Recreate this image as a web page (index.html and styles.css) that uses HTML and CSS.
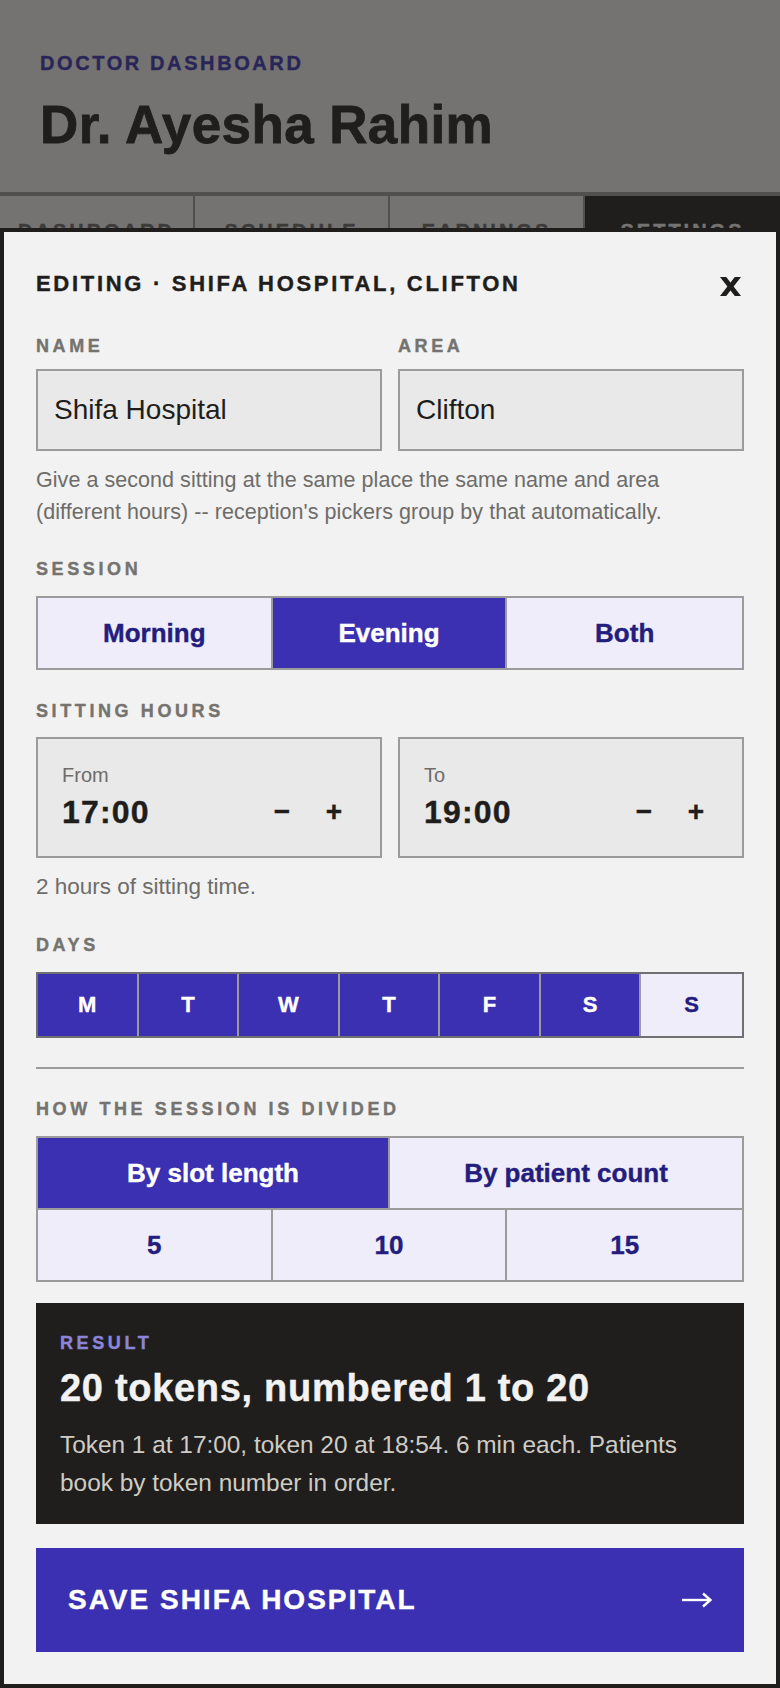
FILE: index.html
```html
<!DOCTYPE html>
<html lang="en">

<head>
    <meta charset="UTF-8">
    <meta name="viewport" content="width=device-width, initial-scale=1.0">
    <title>Doctor Dashboard - Settings</title>
    <link rel="stylesheet" href="styles.css">
</head>

<body>
    <!-- Trang phia sau -->
    <header class="top">
        <p class="kicker">DOCTOR DASHBOARD</p>
        <h1 class="doctor">Dr. Ayesha Rahim</h1>
    </header>
    <nav class="tabs">
        <div class="tab">DASHBOARD</div>
        <div class="tab">SCHEDULE</div>
        <div class="tab">EARNINGS</div>
        <div class="tab active">SETTINGS</div>
    </nav>

    <div class="backdrop"></div>

    <!-- Sheet chinh sua -->
    <section class="sheet">
        <div class="sheet-head">
            <h2 class="sheet-title">EDITING · SHIFA HOSPITAL, CLIFTON</h2>
            <button class="close" aria-label="Close">
                <svg width="21" height="19" viewBox="0 0 21 19">
                    <polygon points="0,0 6.2,0 21,19 14.8,19" fill="#1f1e1c" />
                    <polygon points="14.8,0 21,0 6.2,19 0,19" fill="#1f1e1c" />
                </svg>
            </button>
        </div>

        <div class="fields">
            <div>
                <p class="label label-tight">NAME</p>
                <input class="text-input" type="text" value="Shifa Hospital">
            </div>
            <div>
                <p class="label label-tight">AREA</p>
                <input class="text-input" type="text" value="Clifton">
            </div>
        </div>
        <p class="help">Give a second sitting at the same place the same name and area (different hours) -- reception's pickers group by that automatically.</p>

        <div class="block">
            <p class="label">SESSION</p>
            <div class="seg seg-3">
                <button class="seg-btn">Morning</button>
                <button class="seg-btn on">Evening</button>
                <button class="seg-btn">Both</button>
            </div>
        </div>

        <div class="block">
            <p class="label label-hours">SITTING HOURS</p>
            <div class="fields fields-flat">
                <div class="time">
                    <div class="time-cap">From</div>
                    <div class="time-row">
                        <span class="time-val">17:00</span>
                        <span class="steps"><button class="step">−</button><button class="step">+</button></span>
                    </div>
                </div>
                <div class="time">
                    <div class="time-cap">To</div>
                    <div class="time-row">
                        <span class="time-val">19:00</span>
                        <span class="steps"><button class="step">−</button><button class="step">+</button></span>
                    </div>
                </div>
            </div>
            <p class="hint">2 hours of sitting time.</p>
        </div>

        <div class="block block-days">
            <p class="label">DAYS</p>
            <div class="days">
                <button class="day on">M</button>
                <button class="day on">T</button>
                <button class="day on">W</button>
                <button class="day on">T</button>
                <button class="day on">F</button>
                <button class="day on">S</button>
                <button class="day">S</button>
            </div>
        </div>

        <hr class="rule">

        <div class="block">
            <p class="label">HOW THE SESSION IS DIVIDED</p>
            <div class="split">
                <div class="seg-row seg-2">
                    <button class="seg-btn on">By slot length</button>
                    <button class="seg-btn">By patient count</button>
                </div>
                <div class="seg-row seg-3 seg-row-last">
                    <button class="seg-btn">5</button>
                    <button class="seg-btn">10</button>
                    <button class="seg-btn">15</button>
                </div>
            </div>
        </div>

        <div class="result">
            <p class="result-label">RESULT</p>
            <p class="result-title">20 tokens, numbered 1 to 20</p>
            <p class="result-text">Token 1 at 17:00, token 20 at 18:54. 6 min each. Patients book by token number in order.</p>
        </div>

        <button class="save">
            <span>SAVE SHIFA HOSPITAL</span>
            <svg width="30" height="16" viewBox="0 0 30 16">
                <line x1="0" y1="8" x2="28" y2="8" stroke="#ffffff" stroke-width="2.4" />
                <polyline points="21,1.5 28.5,8 21,14.5" fill="none" stroke="#ffffff" stroke-width="2.4" />
            </svg>
        </button>
    </section>
</body>

</html>
```

FILE: styles.css
```css
* {
    box-sizing: border-box;
}

body {
    margin: 0;
    background-color: #f2f2f2;
    color: #1f1e1c;
    font-family: "Liberation Sans", Arial, sans-serif;
}

p,
h1,
h2 {
    margin: 0;
}

button {
    font-family: inherit;
    cursor: pointer;
}

/* chu dam hon cho giong font goc */
.kicker,
.tab,
.sheet-title,
.label,
.seg-btn,
.day,
.time-val,
.step,
.result-label,
.result-title,
.save {
    -webkit-text-stroke: 0.4px currentColor;
}

/* trang phia sau */

.top {
    padding: 51px 40px 37px;
    border-bottom: 4px solid #9b9b9b;
}

.kicker {
    font-size: 20px;
    line-height: 24px;
    font-weight: bold;
    letter-spacing: 2.6px;
    color: #3a30b1;
}

.doctor {
    margin-top: 20px;
    font-size: 53px;
    line-height: 60px;
    letter-spacing: 0.4px;
    -webkit-text-stroke: 0.8px currentColor;
}

.tabs {
    display: grid;
    grid-template-columns: repeat(4, 1fr);
}

.tab {
    padding: 23px 0 22px;
    text-align: center;
    font-size: 20px;
    line-height: 24px;
    font-weight: bold;
    letter-spacing: 3px;
    color: #666666;
    border-right: 2px solid #9b9b9b;
}

.tab.active {
    background-color: #1f1e1c;
    color: #f2f2f2;
    border-right: 0;
}

.backdrop {
    position: fixed;
    inset: 0;
    background-color: rgba(31, 30, 28, 0.6);
}

/* sheet */

.sheet {
    position: fixed;
    left: 0;
    right: 0;
    bottom: 0;
    background-color: #f2f2f2;
    border: 4px solid #1f1e1c;
    padding: 38px 32px 32px;
}

.sheet-head {
    display: flex;
    justify-content: space-between;
    align-items: flex-start;
}

.sheet-title {
    font-size: 22px;
    line-height: 28px;
    letter-spacing: 2.7px;
}

.close {
    background: none;
    border: 0;
    padding: 0;
    margin: 7px 3px 0 0;
    line-height: 0;
}

.label {
    font-size: 18px;
    line-height: 22px;
    font-weight: bold;
    letter-spacing: 3.6px;
    color: #75736f;
    margin-bottom: 16px;
}

.label-tight {
    margin-bottom: 12px;
}

.label-hours {
    margin-bottom: 15px;
}

.fields {
    display: grid;
    grid-template-columns: 1fr 1fr;
    gap: 16px;
    margin-top: 37px;
}

.fields-flat {
    margin-top: 0;
}

.text-input {
    display: block;
    width: 100%;
    height: 82px;
    padding: 0 16px;
    border: 2px solid #9b9b9b;
    background-color: #e9e9e9;
    color: #1f1e1c;
    font-family: inherit;
    font-size: 28px;
    outline: none;
}

.help {
    margin-top: 13px;
    font-size: 21.5px;
    line-height: 32px;
    letter-spacing: 0.05px;
    color: #6e6c69;
}

.block {
    margin-top: 30px;
}

.block-days {
    margin-top: 31px;
}

/* nut chon */

.seg,
.split {
    border: 2px solid #9b9b9b;
}

.seg,
.seg-row {
    display: grid;
}

.seg-3 {
    grid-template-columns: repeat(3, 1fr);
}

.seg-2 {
    grid-template-columns: repeat(2, 1fr);
}

.seg-row-last {
    border-top: 2px solid #9b9b9b;
}

.seg-btn {
    height: 70px;
    border: 0;
    border-right: 2px solid #9b9b9b;
    background-color: #efedf9;
    color: #241d7d;
    font-size: 26px;
    font-weight: bold;
}

.seg-btn:last-child {
    border-right: 0;
}

.seg-btn.on,
.day.on {
    background-color: #3a30b1;
    color: #ffffff;
}

.time {
    border: 2px solid #9b9b9b;
    background-color: #e9e9e9;
    padding: 24px 26px 25px 24px;
}

.time-cap {
    font-size: 20px;
    line-height: 24px;
    color: #6e6c69;
}

.time-row {
    display: flex;
    justify-content: space-between;
    align-items: center;
    margin-top: 6px;
}

.time-val {
    font-size: 32px;
    line-height: 38px;
    font-weight: bold;
    letter-spacing: 1.2px;
}

.steps {
    display: flex;
    gap: 12px;
}

.step {
    width: 40px;
    height: 38px;
    padding: 0;
    border: 0;
    background: none;
    color: #1f1e1c;
    font-size: 28px;
    font-weight: bold;
    line-height: 38px;
}

.hint {
    margin-top: 13px;
    font-size: 22.5px;
    line-height: 32px;
    color: #6e6c69;
}

.days {
    display: grid;
    grid-template-columns: repeat(7, 1fr);
    border: 2px solid #707070;
}

.day {
    height: 62px;
    border: 0;
    border-right: 2px solid #9b9b9b;
    background-color: #efedf9;
    color: #241d7d;
    font-size: 22px;
    font-weight: bold;
}

.day:last-child {
    border-right: 0;
}

.rule {
    margin: 29px 0 0;
    border: 0;
    height: 2px;
    background-color: #9b9b9b;
}

.block + .rule + .block {
    margin-top: 29px;
}

/* ket qua */

.result {
    margin-top: 21px;
    background-color: #1f1e1c;
    padding: 29px 24px 22px;
}

.result-label {
    font-size: 18px;
    line-height: 22px;
    font-weight: bold;
    letter-spacing: 3.6px;
    color: #8c84d9;
}

.result-title {
    margin-top: 11px;
    font-size: 38px;
    line-height: 46px;
    font-weight: bold;
    letter-spacing: 0.7px;
    color: #f2f2f2;
}

.result-text {
    margin-top: 15px;
    font-size: 24.4px;
    line-height: 38px;
    color: #cfccc6;
}

.save {
    margin-top: 24px;
    width: 100%;
    height: 104px;
    padding: 0 32px;
    display: flex;
    justify-content: space-between;
    align-items: center;
    border: 0;
    background-color: #3a30b1;
    color: #ffffff;
    font-size: 28px;
    font-weight: bold;
    letter-spacing: 2px;
}
```
